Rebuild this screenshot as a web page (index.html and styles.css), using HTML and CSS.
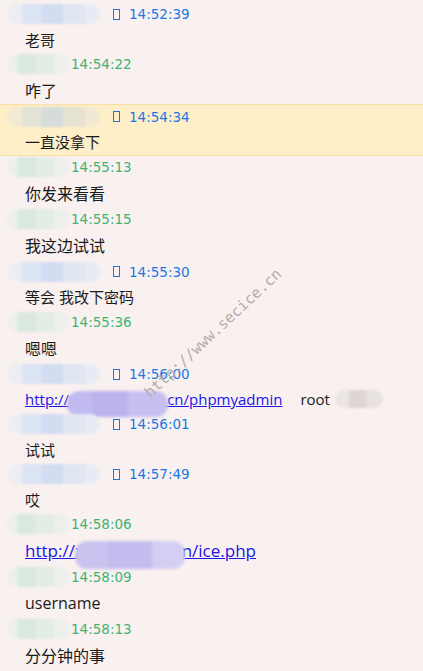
FILE: index.html
```html
<!DOCTYPE html>
<html lang="zh-CN">
<head>
<meta charset="utf-8">
<title>聊天记录</title>
<link rel="stylesheet" href="styles.css">
</head>
<body>
<div class="log">
  <div class="msg me">
    <div class="head"><span class="name nb"></span><span class="tofu"></span><span class="time">14:52:39</span></div>
    <div class="text">老哥</div>
  </div>
  <div class="msg other">
    <div class="head"><span class="name ng"></span><span class="time">14:54:22</span></div>
    <div class="text">咋了</div>
  </div>
  <div class="msg me hl">
    <div class="head"><span class="name nb nb-warm"></span><span class="tofu"></span><span class="time">14:54:34</span></div>
    <div class="text">一直没拿下</div>
  </div>
  <div class="msg other">
    <div class="head"><span class="name ng"></span><span class="time">14:55:13</span></div>
    <div class="text">你发来看看</div>
  </div>
  <div class="msg other">
    <div class="head"><span class="name ng"></span><span class="time">14:55:15</span></div>
    <div class="text">我这边试试</div>
  </div>
  <div class="msg me">
    <div class="head"><span class="name nb"></span><span class="tofu"></span><span class="time">14:55:30</span></div>
    <div class="text">等会 我改下密码</div>
  </div>
  <div class="msg other">
    <div class="head"><span class="name ng"></span><span class="time">14:55:36</span></div>
    <div class="text">嗯嗯</div>
  </div>
  <div class="msg me">
    <div class="head"><span class="name nb"></span><span class="tofu"></span><span class="time">14:56:00</span></div>
    <div class="text"><span class="linkwrap"><a class="link" href="#">http://xxxxxxxxxxxx.cn/phpmyadmin</a><span class="mask mask1"></span></span><span class="pw">root</span><span class="smudge"></span></div>
  </div>
  <div class="msg me">
    <div class="head"><span class="name nb"></span><span class="tofu"></span><span class="time">14:56:01</span></div>
    <div class="text">试试</div>
  </div>
  <div class="msg me">
    <div class="head"><span class="name nb"></span><span class="tofu"></span><span class="time">14:57:49</span></div>
    <div class="text">哎</div>
  </div>
  <div class="msg other">
    <div class="head"><span class="name ng"></span><span class="time">14:58:06</span></div>
    <div class="text"><span class="linkwrap"><a class="link link-lg" href="#">http://xxxxxxxxxxxxn/ice.php</a><span class="mask mask2"></span></span></div>
  </div>
  <div class="msg other">
    <div class="head"><span class="name ng"></span><span class="time">14:58:09</span></div>
    <div class="text">username</div>
  </div>
  <div class="msg other">
    <div class="head"><span class="name ng"></span><span class="time">14:58:13</span></div>
    <div class="text">分分钟的事</div>
  </div>
</div>
<div class="watermark">http://www.secice.cn</div>
</body>
</html>
```

FILE: styles.css
```css
html, body {
  margin: 0;
  padding: 0;
}
body {
  background: #f9f1ef;
  width: 423px;
  height: 671px;
  overflow: hidden;
  position: relative;
  font-family: "Open Sans", "Noto Sans CJK SC", sans-serif;
  color: #1a1a1a;
}
.log {
  padding-top: 3px;
}
.msg {
  display: flex;
  flex-direction: column;
}
.head {
  height: 22px;
  display: flex;
  align-items: center;
  font-family: "DejaVu Sans", sans-serif;
  font-size: 13.5px;
}
.text {
  padding-left: 25px;
  display: flex;
  align-items: center;
  white-space: nowrap;
}
.me .text {
  height: 28px;
  font-size: 15px;
}
.other .text {
  height: 30.5px;
  font-size: 16px;
}
.me .time {
  color: #1a78e6;
  margin-left: 9px;
}
.other .time {
  color: #3db374;
  margin-left: 1px;
}
.name {
  display: inline-block;
  height: 20px;
  margin-left: 7px;
  border-radius: 10px;
  filter: blur(1.2px);
  flex-shrink: 0;
}
.nb {
  width: 93px;
  background: linear-gradient(90deg, #eceef3 0 16%, #dce3f3 16% 38%, #d2ddf2 38% 60%, #e0e6f2 60% 84%, #e8ebf3 84%);
}
.nb-warm {
  background: linear-gradient(90deg, #f2e9d3 0 16%, #e2e3d6 16% 38%, #d6dcd9 38% 60%, #e6e2d0 60% 84%, #f0e8d2 84%);
}
.ng {
  width: 63px;
  background: linear-gradient(90deg, #ecefec 0 18%, #d9e9de 18% 46%, #e4ece6 46% 74%, #ecefec 74%);
}
.tofu {
  display: inline-block;
  width: 5px;
  height: 9px;
  border: 1px solid #1a78e6;
  margin-left: 13px;
  flex-shrink: 0;
}
.hl {
  background: #feefc9;
  border-top: 1px solid #f8e0a4;
  border-bottom: 1px solid #f8e0a4;
  margin-top: -2px;
  padding-top: 1px;
}
.hl .text {
  height: 27px;
}
.linkwrap {
  position: relative;
  display: inline-block;
}
.link {
  color: #1c14e8;
  text-decoration: underline;
}
.link-lg {
  font-size: 17px;
}
.mask {
  position: absolute;
  border-radius: 12px;
  filter: blur(1.5px);
}
.mask1 {
  left: 42px;
  top: 2px;
  width: 101px;
  height: 26px;
  background: linear-gradient(90deg, #c0baf0 0 25%, #bbb3ee 25% 60%, #c6bff0 60%);
}
.mask2 {
  left: 50px;
  top: 2px;
  width: 110px;
  height: 28px;
  background: linear-gradient(90deg, #c9c3ef 0 30%, #c4bcee 30% 70%, #d4cef2 70%);
}
.pw {
  margin-left: 18px;
  font-size: 15px;
}
.smudge {
  display: inline-block;
  width: 48px;
  height: 18px;
  margin-left: 5px;
  border-radius: 9px;
  background: linear-gradient(90deg, #ebe5e3 0 30%, #ddd6d3 30% 65%, #e8e2df 65%);
  filter: blur(1.2px);
}
.watermark {
  position: absolute;
  left: 121px;
  top: 324px;
  width: 184px;
  text-align: center;
  font-family: "DejaVu Sans Mono", monospace;
  font-size: 15px;
  line-height: 18px;
  color: #b5adab;
  transform: rotate(-43deg);
  pointer-events: none;
}
```
